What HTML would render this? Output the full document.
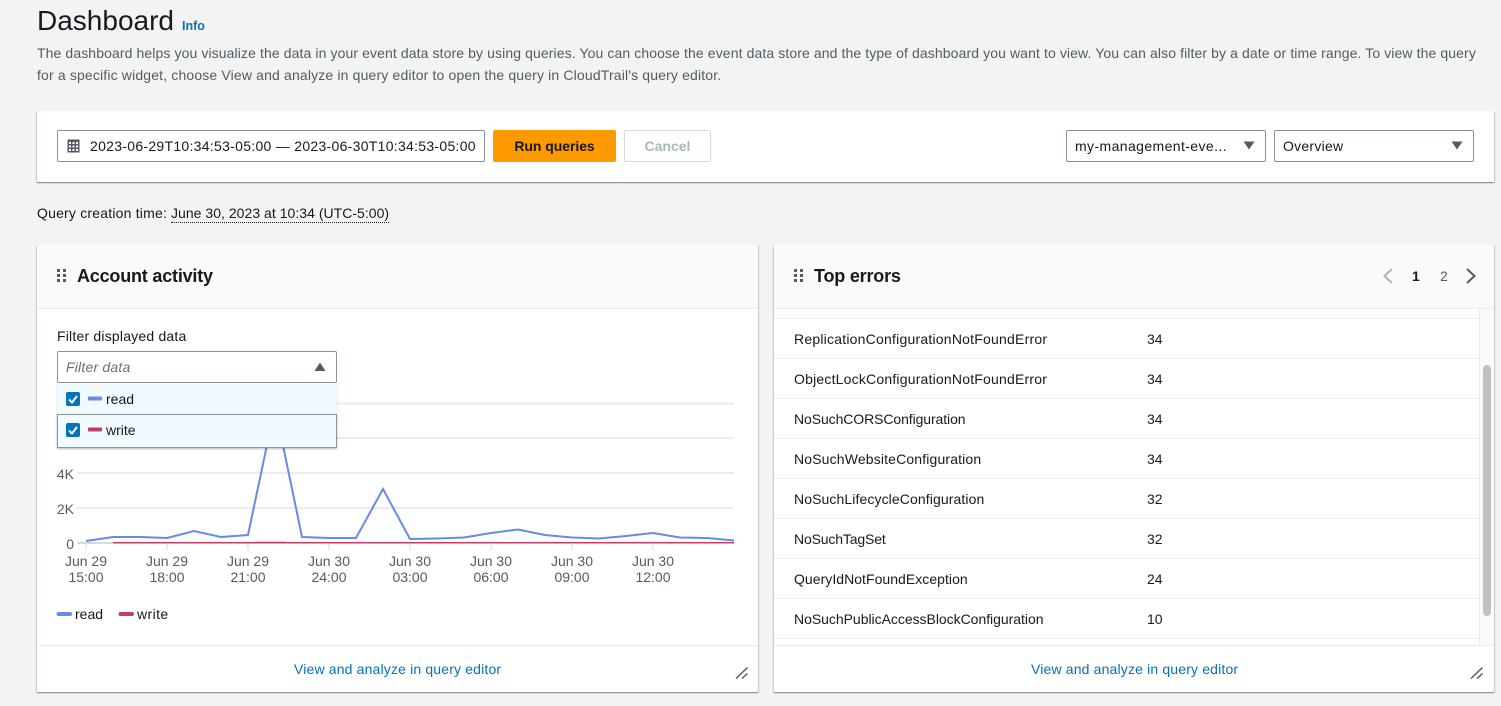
<!DOCTYPE html>
<html><head><meta charset="utf-8"><style>
html,body{margin:0;padding:0;width:1501px;height:706px;overflow:hidden;background:#f2f3f3;font-family:"Liberation Sans",sans-serif;color:#16191f;font-size:14px}
.t{position:absolute;white-space:nowrap;line-height:20px}
.b{position:absolute;box-sizing:border-box}
.card{background:#fff;box-shadow:0 1px 1px 0 rgba(0,28,36,.3),1px 1px 1px 0 rgba(0,28,36,.15),-1px 1px 1px 0 rgba(0,28,36,.15)}
.inp{background:#fff;border:1px solid #879596;border-radius:2px}
.row{position:absolute;left:774px;width:704px;height:1px;background:#eaeded}
.link{color:#0073bb}
.gray{color:#545b64}
</style></head><body>
<div class="t" style="left:37px;top:3px;font-size:28px;line-height:36px">Dashboard</div>
<div class="t link" style="left:182px;top:16px;font-size:12.5px;font-weight:bold">Info</div>
<div class="t gray" style="left:37px;top:43px;letter-spacing:.103px">The dashboard helps you visualize the data in your event data store by using queries. You can choose the event data store and the type of dashboard you want to view. You can also filter by a date or time range. To view the query</div>
<div class="t gray" style="left:37px;top:65px;letter-spacing:.155px">for a specific widget, choose View and analyze in query editor to open the query in CloudTrail's query editor.</div>

<div class="b card" style="left:37px;top:111px;width:1457px;height:71px"></div>
<div class="b inp" style="left:57px;top:130px;width:428px;height:32px"></div>
<svg class="b" style="left:67px;top:139px" width="14" height="14" viewBox="0 0 14 14"><rect x=".5" y=".5" width="12" height="13" fill="#545b64"/><g fill="#fff"><rect x="2" y="3" width="2" height="2"/><rect x="5.5" y="3" width="2" height="2"/><rect x="9" y="3" width="2" height="2"/><rect x="2" y="6.5" width="2" height="2"/><rect x="5.5" y="6.5" width="2" height="2"/><rect x="9" y="6.5" width="2" height="2"/><rect x="2" y="10" width="2" height="2"/><rect x="5.5" y="10" width="2" height="2"/><rect x="9" y="10" width="2" height="2"/></g></svg>
<div class="t" style="left:90px;top:136px;letter-spacing:.29px">2023-06-29T10:34:53-05:00 — 2023-06-30T10:34:53-05:00</div>
<div class="b" style="left:493px;top:130px;width:123px;height:32px;background:#ff9900;border-radius:2px"></div>
<div class="t" style="left:493px;width:123px;text-align:center;top:136px;font-weight:bold;letter-spacing:-.05px">Run queries</div>
<div class="b" style="left:624px;top:130px;width:87px;height:32px;background:#fff;border:1px solid #d5dbdb;border-radius:2px"></div>
<div class="t" style="left:624px;width:87px;text-align:center;top:136px;font-weight:bold;color:#aab7b8">Cancel</div>
<div class="b inp" style="left:1066px;top:130px;width:200px;height:32px"></div>
<div class="t" style="left:1075px;top:136px;letter-spacing:.4px">my-management-eve...</div>
<svg class="b" style="left:1243px;top:141px" width="12" height="9"><path d="M0.5 0.5H11.5L6 8.5Z" fill="#545b64"/></svg>
<div class="b inp" style="left:1274px;top:130px;width:200px;height:32px"></div>
<div class="t" style="left:1283px;top:136px;letter-spacing:.25px">Overview</div>
<svg class="b" style="left:1451px;top:141px" width="12" height="9"><path d="M0.5 0.5H11.5L6 8.5Z" fill="#545b64"/></svg>

<div class="t" style="left:37px;top:203px;letter-spacing:.2px">Query creation time:</div>
<div class="t" style="left:171px;top:203px;letter-spacing:.03px"><span style="border-bottom:1px dotted #16191f;padding-bottom:1px">June 30, 2023 at 10:34 (UTC-5:00)</span></div>

<!-- Left widget -->
<div class="b card" style="left:37px;top:245px;width:721px;height:447px"></div>
<div class="b" style="left:37px;top:245px;width:721px;height:64px;background:#fafafa;border-bottom:1px solid #eaeded"></div>
<svg class="b" style="left:57px;top:269px" width="9" height="14"><g fill="#545b64"><rect width="3" height="3" x="0" y="0"/><rect width="3" height="3" x="6" y="0"/><rect width="3" height="3" x="0" y="5"/><rect width="3" height="3" x="6" y="5"/><rect width="3" height="3" x="0" y="10"/><rect width="3" height="3" x="6" y="10"/></g></svg>
<div class="t" style="left:77px;top:266px;font-size:18px;font-weight:bold;letter-spacing:-.2px">Account activity</div>
<div class="t" style="left:57px;top:326px;letter-spacing:.2px">Filter displayed data</div>

<svg class="b" style="left:37px;top:395px" width="721" height="240" viewBox="37 395 721 240">
<g fill="none" stroke="#eaeded" stroke-width="2">
<path d="M77 403.5H734M77 438H734M77 473H734M77 508H734"/>
<path d="M77 543H113" stroke="#d5dbdb"/>
<path d="M86 544V550M167 544V550M248 544V550M329 544V550M410 544V550M491 544V550M572 544V550M653 544V550"/>
</g>
<path d="M255 541.5H286" stroke="#f5c6d3" stroke-width="1" fill="none"/>
<polyline fill="none" stroke="#688ae8" stroke-width="2" points="86,541 113,537 140,537 167,538 194,531 221,537 248,535 275,407 302,537 329,538 356,538 383,489 410,539 437,538.5 464,537.5 491,533 518,529.5 545,535 572,537.5 599,538.5 626,536 653,533 680,537.5 707,538 734,540.5"/>
<path d="M113 542.7H734" stroke="#c33d69" stroke-width="1.5" fill="none"/>
<g font-family="Liberation Sans, sans-serif" font-size="14" fill="#545b64">
<text x="74" y="479" text-anchor="end">4K</text>
<text x="74" y="514" text-anchor="end">2K</text>
<text x="74" y="549" text-anchor="end">0</text>
<g text-anchor="middle">
<text x="86" y="566">Jun 29</text><text x="86" y="582">15:00</text>
<text x="167" y="566">Jun 29</text><text x="167" y="582">18:00</text>
<text x="248" y="566">Jun 29</text><text x="248" y="582">21:00</text>
<text x="329" y="566">Jun 30</text><text x="329" y="582">24:00</text>
<text x="410" y="566">Jun 30</text><text x="410" y="582">03:00</text>
<text x="491" y="566">Jun 30</text><text x="491" y="582">06:00</text>
<text x="572" y="566">Jun 30</text><text x="572" y="582">09:00</text>
<text x="653" y="566">Jun 30</text><text x="653" y="582">12:00</text>
</g></g>
<path d="M58.500 614H70" stroke="#688ae8" stroke-width="4" stroke-linecap="round"/>
<path d="M120.500 614H132" stroke="#c33d69" stroke-width="4" stroke-linecap="round"/>
</svg>
<div class="t" style="left:75px;top:604px">read</div>
<div class="t" style="left:137px;top:604px;letter-spacing:.4px">write</div>

<div class="b inp" style="left:57px;top:351px;width:280px;height:32px"></div>
<div class="t" style="left:66px;top:357px;font-style:italic;color:#687078;letter-spacing:.2px">Filter data</div>
<svg class="b" style="left:314px;top:362px" width="12" height="10"><path d="M6 .5L11.500 9H.5Z" fill="#545b64"/></svg>
<div class="b" style="left:57px;top:384px;width:280px;height:31px;background:#f1faff;box-shadow:0 1px 2px rgba(0,28,36,.2)"></div>
<div class="b" style="left:57px;top:414px;width:280px;height:34px;background:#f1faff;border:1px solid #879596;box-shadow:0 1px 2px rgba(0,28,36,.3)"></div>
<svg class="b" style="left:66px;top:392px" width="28" height="46">
<rect width="14" height="14" rx="2" fill="#0073bb"/><path d="M3 7.500L6 10.500L11 4" fill="none" stroke="#fff" stroke-width="2"/>
<rect y="31" width="14" height="14" rx="2" fill="#0073bb"/><path d="M3 38.500L6 41.500L11 35" fill="none" stroke="#fff" stroke-width="2"/>
</svg>
<svg class="b" style="left:88px;top:396px" width="14" height="36"><path d="M1.500 2.500H12.500" stroke="#688ae8" stroke-width="4" stroke-linecap="round"/><path d="M1.500 33.500H12.500" stroke="#c33d69" stroke-width="4" stroke-linecap="round"/></svg>
<div class="t" style="left:106px;top:389px">read</div>
<div class="t" style="left:106px;top:420px">write</div>

<div class="b" style="left:37px;top:645px;width:721px;height:1px;background:#eaeded"></div>
<div class="t link" style="left:294px;top:659px;letter-spacing:.16px">View and analyze in query editor</div>
<svg class="b" style="left:735px;top:666px" width="14" height="14"><path d="M1 12.500L12.500 1.500M7 12.500L12.500 7.500" stroke="#545b64" stroke-width="1.500" fill="none"/></svg>

<!-- Right widget -->
<div class="b card" style="left:774px;top:245px;width:720px;height:447px"></div>
<div class="b" style="left:774px;top:245px;width:720px;height:64px;background:#fafafa;border-bottom:1px solid #eaeded"></div>
<svg class="b" style="left:794px;top:269px" width="9" height="14"><g fill="#545b64"><rect width="3" height="3" x="0" y="0"/><rect width="3" height="3" x="6" y="0"/><rect width="3" height="3" x="0" y="5"/><rect width="3" height="3" x="6" y="5"/><rect width="3" height="3" x="0" y="10"/><rect width="3" height="3" x="6" y="10"/></g></svg>
<div class="t" style="left:814px;top:266px;font-size:18px;font-weight:bold;letter-spacing:-.2px">Top errors</div>
<svg class="b" style="left:1382px;top:268px" width="12" height="16"><path d="M10 1L2.500 8L10 15" fill="none" stroke="#aab7b8" stroke-width="2"/></svg>
<div class="t" style="left:1412px;top:266px;font-weight:bold">1</div>
<div class="t gray" style="left:1440px;top:266px">2</div>
<svg class="b" style="left:1465px;top:268px" width="12" height="16"><path d="M2 1L9.500 8L2 15" fill="none" stroke="#545b64" stroke-width="2"/></svg>

<div class="b" style="left:1479px;top:309px;width:15px;height:336px;background:#fafafa;border-left:1px solid #eaeded"></div>
<div class="b" style="left:1483px;top:365px;width:8px;height:251px;background:#c1c1c1;border-radius:4px"></div>
<div class="row" style="top:318px"></div><div class="row" style="top:358px"></div><div class="row" style="top:398px"></div><div class="row" style="top:438px"></div><div class="row" style="top:478px"></div><div class="row" style="top:518px"></div><div class="row" style="top:558px"></div><div class="row" style="top:598px"></div><div class="row" style="top:638px"></div>
<div class="t" style="left:794px;top:329px;letter-spacing:.22px">ReplicationConfigurationNotFoundError</div><div class="t" style="left:1147px;top:329px">34</div>
<div class="t" style="left:794px;top:369px;letter-spacing:.2px">ObjectLockConfigurationNotFoundError</div><div class="t" style="left:1147px;top:369px">34</div>
<div class="t" style="left:794px;top:409px;letter-spacing:-.09px">NoSuchCORSConfiguration</div><div class="t" style="left:1147px;top:409px">34</div>
<div class="t" style="left:794px;top:449px;letter-spacing:.15px">NoSuchWebsiteConfiguration</div><div class="t" style="left:1147px;top:449px">34</div>
<div class="t" style="left:794px;top:489px;letter-spacing:.1px">NoSuchLifecycleConfiguration</div><div class="t" style="left:1147px;top:489px">32</div>
<div class="t" style="left:794px;top:529px;letter-spacing:-.15px">NoSuchTagSet</div><div class="t" style="left:1147px;top:529px">32</div>
<div class="t" style="left:794px;top:569px;letter-spacing:.04px">QueryIdNotFoundException</div><div class="t" style="left:1147px;top:569px">24</div>
<div class="t" style="left:794px;top:609px;letter-spacing:-.03px">NoSuchPublicAccessBlockConfiguration</div><div class="t" style="left:1147px;top:609px">10</div>

<div class="b" style="left:774px;top:645px;width:720px;height:1px;background:#eaeded"></div>
<div class="t link" style="left:1031px;top:659px;letter-spacing:.16px">View and analyze in query editor</div>
<svg class="b" style="left:1470px;top:666px" width="14" height="14"><path d="M1 12.500L12.500 1.500M7 12.500L12.500 7.500" stroke="#545b64" stroke-width="1.500" fill="none"/></svg>
</body></html>
